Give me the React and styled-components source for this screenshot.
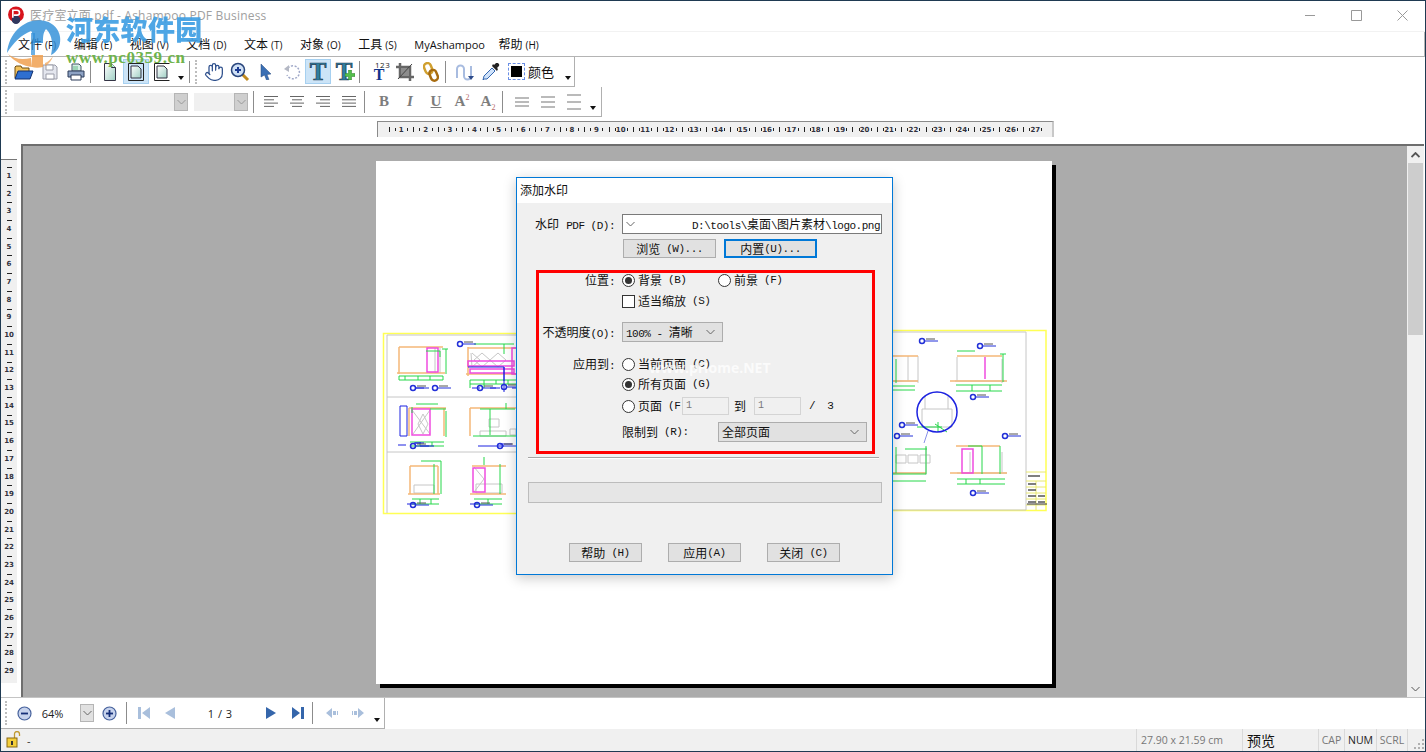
import React from "react";
import styled, { createGlobalStyle } from "styled-components";
import { Hand } from "lucide-react";

const UI = `"Open Sans", "Noto Sans CJK SC", sans-serif`;
const DLG = `"Liberation Mono", "Noto Sans CJK SC", monospace`;

const GlobalStyle = createGlobalStyle`
  html, body { margin: 0; padding: 0; background: #fff; overflow: hidden; }
  * { box-sizing: border-box; }
`;

const Window = styled.div`
  position: relative;
  width: 1426px;
  height: 752px;
  display: flex;
  flex-direction: column;
  background: #fff;
  border: 1px solid #1f3a52;
  font-family: ${UI};
  overflow: hidden;
`;

/* title bar */
const TitleBar = styled.div`
  height: 31px;
  flex: none;
  display: flex;
  align-items: center;
  padding: 0 0 2px 6px;
  border-bottom: 1px solid #f2f2f2;
`;
const Title = styled.span`
  margin-left: 5px;
  font-size: 12px;
  letter-spacing: 0.2px;
  color: #a0a0a0;
  flex: 1;
`;
const WinButton = styled.div`
  width: 46px;
  height: 28px;
  display: flex;
  align-items: center;
  justify-content: center;
`;

/* menu */
const MenuBar = styled.div`
  height: 25px;
  flex: none;
  display: flex;
  align-items: center;
  gap: 17.6px;
  padding-left: 17px;
  border-bottom: 1px solid #b4b4b4;
  border-right: 1px solid #b4b4b4;
`;
const MenuItem = styled.span`
  font-size: ${(p) => (p.$latin ? 11 : 12)}px;
  margin-right: ${(p) => (p.$latin ? -4 : 0)}px;
  color: #111;
  white-space: nowrap;
  small { font-size: 10px; margin-left: 3px; }
`;

/* toolbars */
const Toolbar = styled.div`
  height: 30px;
  flex: none;
  width: ${(p) => p.$width}px;
  display: flex;
  align-items: center;
  padding-left: 4px;
  border-bottom: 1px solid #b0b0b0;
  border-right: 1px solid #b0b0b0;
`;
const Grip = styled.div`
  width: 2px;
  height: 24px;
  flex: none;
  margin-right: ${(p) => p.$after ?? 4}px;
  border-left: 2px dotted #bdbdbd;
`;
const Sep = styled.div`
  width: 1px;
  height: 22px;
  flex: none;
  margin: 0 ${(p) => p.$right ?? 6}px 0 ${(p) => p.$left ?? 1}px;
  background: #8c8c8c;
`;
const ToolButton = styled.div`
  position: relative;
  width: ${(p) => p.$width ?? 26}px;
  height: 25px;
  flex: none;
  display: flex;
  align-items: center;
  justify-content: center;
  background: ${(p) => (p.$active ? "#cce4f7" : "transparent")};
  border: 1px solid ${(p) => (p.$active ? "#a6d0f0" : "transparent")};
`;
const DropArrow = styled.div`
  width: 12px;
  height: 25px;
  flex: none;
  display: flex;
  align-items: flex-end;
  justify-content: center;
  padding-bottom: 4px;
  &::after {
    content: "";
    border-left: 3.5px solid transparent;
    border-right: 3.5px solid transparent;
    border-top: 4px solid #111;
  }
`;
const TextGlyph = styled.span`
  font-family: "Liberation Serif", serif;
  font-weight: bold;
  font-style: ${(p) => (p.$italic ? "italic" : "normal")};
  text-decoration: ${(p) => (p.$under ? "underline" : "none")};
  font-size: ${(p) => p.$size ?? 15}px;
  margin-top: ${(p) => p.$top ?? 0}px;
  line-height: 1;
  color: ${(p) => p.$color ?? "#7d7d7d"};
  sup, sub { font-size: 8px; color: #b56a6a; line-height: 0; font-weight: normal; }
`;
const BigT = styled(TextGlyph)`
  font-size: 25px;
  color: #2f7f9f;
  -webkit-text-stroke: 0.7px #24384f;
`;
const SmallDigits = styled.span`
  position: absolute;
  top: 0;
  left: 8px;
  font-size: 8px;
  line-height: 10px;
  letter-spacing: 0.5px;
  color: #222;
`;
const ColorSwatch = styled.div`
  width: 17px;
  height: 17px;
  margin-left: 4px;
  flex: none;
  padding: 2px;
  border: 1px dashed #6b8fe6;
  &::after { content: ""; display: block; width: 100%; height: 100%; background: #000; }
`;
const ColorLabel = styled.span`
  width: 36px;
  margin-left: 3px;
  font-size: 13px;
  color: #111;
`;
const FontCombo = styled.div`
  width: ${(p) => p.$width}px;
  height: 18px;
  margin-right: ${(p) => p.$after}px;
  flex: none;
  display: flex;
  justify-content: flex-end;
  background: #f0f0f0;
`;
const ComboArrow = styled.div`
  width: ${(p) => p.$width ?? 14}px;
  height: ${(p) => p.$height ?? 18}px;
  flex: none;
  display: flex;
  align-items: center;
  justify-content: center;
  background: ${(p) => p.$bg ?? "#cfcfcf"};
  border: 1px solid #b5b5b5;
`;

/* rulers */
const RulerRow = styled.div`
  height: 27px;
  flex: none;
  padding: 4px 0 0 376px;
`;
const HRuler = styled.div`
  width: 677px;
  height: 16px;
  display: flex;
  align-items: center;
  padding-left: 11px;
  background: #f0f0f0;
  border-top: 1px solid #8a8a8a;
  border-left: 1px solid #8a8a8a;
  border-right: 2px solid #c8c8c8;
  overflow: hidden;
  position: relative;
`;
const HCell = styled.div`
  width: 24.4px;
  flex: none;
  display: grid;
  grid-template-columns: repeat(4, 1fr);
  align-items: center;
  justify-items: start;
`;
const HTick = styled.i`
  display: block;
  width: 1px;
  height: ${(p) => (p.$tall ? 5 : 3)}px;
  background: #222;
`;
const RulerNum = styled.span`
  font-family: "DejaVu Sans", sans-serif;
  font-size: 7px;
  font-weight: bold;
  line-height: 8px;
  color: #30303c;
`;
const HNum = styled(RulerNum)`
  width: 6px;
  margin-left: -3px;
  display: flex;
  justify-content: center;
  white-space: nowrap;
`;

/* main */
const Main = styled.div`
  flex: 1;
  min-height: 0;
  display: flex;
  border-bottom: 1px solid #c4c4c4;
`;
const LeftGutter = styled.div`
  width: 20px;
  flex: none;
  padding-top: 15px;
`;
const VRuler = styled.div`
  width: 16px;
  height: 524px;
  padding-top: 7px;
  background: #f0f0f0;
  border-top: 1px solid #777;
  display: flex;
  flex-direction: column;
`;
const VCell = styled.div`
  height: 17.7px;
  flex: none;
  position: relative;
  display: flex;
  align-items: center;
  justify-content: center;
  &::before {
    content: "";
    position: absolute;
    top: 0;
    left: 6px;
    width: 5px;
    height: 1px;
    background: #222;
  }
`;
const Viewer = styled.div`
  flex: 1;
  background: #ababab;
  border-top: 2px solid #6e6e6e;
  border-left: 2px solid #6e6e6e;
  padding: 15px 0 0 353px;
`;
const Page = styled.div`
  width: 676px;
  height: 523px;
  background: #fff;
  box-shadow: 4px 4px 0 #000;
  display: flex;
  align-items: center;
`;
const Scrollbar = styled.div`
  width: 17px;
  flex: none;
  display: flex;
  flex-direction: column;
  align-items: center;
  background: #f0f0f0;
  margin-right: 1px;
  border-top: 2px solid #6e6e6e;
`;
const ScrollArrow = styled.div`
  height: 17px;
  width: 100%;
  flex: none;
  display: flex;
  align-items: center;
  justify-content: center;
`;
const ScrollThumb = styled.div`
  width: 15px;
  height: 172px;
  background: #cdcdcd;
`;
const ScrollTrack = styled.div`
  flex: 1;
`;

/* bottom */
const BottomBar = styled(Toolbar)`
  height: 31px;
`;
const ZoomValue = styled.span`
  width: 37px;
  margin-right: 9px;
  flex: none;
  font-size: 11px;
  color: #222;
  text-align: center;
`;
const PageNo = styled.span`
  width: 74px;
  flex: none;
  font-size: 11px;
  word-spacing: 1px;
  color: #222;
  text-align: center;
`;
const NavButton = styled.div`
  width: ${(p) => p.$width ?? 26}px;
  height: 24px;
  flex: none;
  display: flex;
  align-items: center;
  justify-content: center;
`;
const StatusBar = styled.div`
  height: 22px;
  flex: none;
  display: flex;
  align-items: center;
  background: #f0f0f0;
  padding-left: 5px;
`;
const StatusText = styled.span`
  flex: 1;
  margin-left: 6px;
  font-size: 11px;
  color: #333;
`;
const StatusCell = styled.div`
  width: ${(p) => p.$width}px;
  height: 100%;
  flex: none;
  display: flex;
  align-items: center;
  justify-content: ${(p) => (p.$left ? "flex-start" : "center")};
  padding-left: ${(p) => (p.$left ? 4 : 0)}px;
  border-left: 1px solid #d9d9d9;
  font-size: ${(p) => p.$size ?? 10.5}px;
  color: ${(p) => p.$color ?? "#777"};
`;
const SizeGrip = styled.div`
  width: 18px;
  height: 100%;
  flex: none;
  border-left: 1px solid #d9d9d9;
  display: flex;
  align-items: flex-end;
  justify-content: flex-end;
  padding: 0 1px 2px 0;
`;

/* dialog */
const Dialog = styled.div`
  position: absolute;
  left: 515px;
  top: 176px;
  width: 377px;
  height: 398px;
  display: flex;
  flex-direction: column;
  background: #f0f0f0;
  border: 1px solid #0078d7;
  box-shadow: 0 3px 12px rgba(0, 0, 0, 0.22);
  font-family: ${DLG};
  font-size: 12px;
  color: #111;
  small { font-size: 11px; letter-spacing: -0.5px; }
`;
const DialogTitle = styled.div`
  height: 25px;
  flex: none;
  background: #fff;
  padding: 3px 0 0 3px;
  font-family: "Noto Sans CJK SC", sans-serif;
  font-size: 12px;
`;
const DialogBody = styled.div`
  flex: 1;
  position: relative;
  display: flex;
  flex-direction: column;
  padding: 11px 0 0 0;
`;
const TopRow = styled.div`
  display: flex;
  align-items: center;
  height: 20px;
`;
const TopLabel = styled.div`
  width: 98px;
  flex: none;
  text-align: right;
  white-space: nowrap;
`;
const PathBox = styled.div`
  width: 260px;
  height: 20px;
  margin-left: 7px;
  display: flex;
  align-items: center;
  justify-content: space-between;
  padding: 0 1px 0 3px;
  background: #fff;
  border: 1px solid #7a7a7a;
  white-space: nowrap;
`;
const ButtonRow = styled.div`
  display: flex;
  gap: 8px;
  margin: 5px 0 0 106px;
`;
const Btn = styled.div`
  width: ${(p) => p.$width ?? 93}px;
  height: 19px;
  display: flex;
  align-items: center;
  justify-content: center;
  white-space: nowrap;
  background: #e1e1e1;
  border: ${(p) => (p.$focus ? "2px solid #0078d7" : "1px solid #adadad")};
`;
const RedBox = styled.div`
  width: 339px;
  height: 184px;
  margin: 12px 0 0 19px;
  border: 3px solid #f00;
`;
const Row = styled.div`
  display: flex;
  align-items: center;
  height: ${(p) => p.$h ?? 14}px;
  margin-top: ${(p) => p.$top ?? 0}px;
  padding-left: ${(p) => (p.$indent ? 83 : 0)}px;
  white-space: nowrap;
`;
const RowLabel = styled.div`
  width: 76px;
  margin-right: 7px;
  flex: none;
  text-align: right;
`;
const Radio = styled.span`
  width: 13px;
  height: 13px;
  margin-right: 3px;
  flex: none;
  display: flex;
  align-items: center;
  justify-content: center;
  border-radius: 50%;
  background: #fff;
  border: 1px solid #333;
  &::after {
    content: "";
    width: 7px;
    height: 7px;
    border-radius: 50%;
    background: ${(p) => (p.$on ? "#333" : "transparent")};
  }
`;
const Check = styled.span`
  width: 13px;
  height: 13px;
  margin-right: 3px;
  flex: none;
  background: #fff;
  border: 1px solid #333;
`;
const Option = styled.span`
  width: ${(p) => p.$width ?? "auto"};
  display: flex;
  align-items: center;
  flex: none;
`;
const Select = styled.div`
  width: ${(p) => p.$width}px;
  height: 20px;
  display: flex;
  align-items: center;
  justify-content: space-between;
  padding: 0 7px 0 3px;
  background: #e1e1e1;
  border: 1px solid #adadad;
`;
const PageInput = styled.div`
  width: 47px;
  height: 18px;
  padding-left: 3px;
  background: #f0f0f0;
  border: 1px solid #d4d4d4;
  color: #777;
  font-size: 10px;
  line-height: 16px;
`;
const InlineWord = styled.span`
  margin: 0 8px 0 5px;
`;
const PageTotal = styled.small`
  margin-left: 8px;
`;
const Divider = styled.div`
  width: 351px;
  height: 2px;
  margin: 3px 0 0 11px;
  background: #a5a5a5;
  border-bottom: 1px solid #fff;
`;
const Progress = styled.div`
  width: 354px;
  height: 21px;
  margin: 23px 0 0 11px;
  background: #e6e6e6;
  border: 1px solid #bcbcbc;
`;
const FooterRow = styled.div`
  display: flex;
  gap: 26px;
  margin: 40px 0 0 52px;
`;
const GhostMark = styled.span`
  position: absolute;
  left: 132px;
  top: 155px;
  font-family: "Open Sans", sans-serif;
  font-weight: bold;
  font-size: 14px;
  color: rgba(255, 255, 255, 0.75);
`;

/* site watermark */
const SiteMark = styled.div`
  position: absolute;
  left: 4px;
  top: 12px;
  display: flex;
  pointer-events: none;
`;
const SiteText = styled.div`
  margin-left: 3px;
  display: flex;
  flex-direction: column;
`;
const SiteName = styled.span`
  font-family: "Noto Sans CJK SC", sans-serif;
  font-weight: 900;
  font-size: 27px;
  line-height: 37px;
  margin: -3px 0 3px;
  letter-spacing: 0.3px;
  color: #3f9fe3;
  opacity: 0.92;
`;
const SiteUrl = styled.span`
  font-family: "Liberation Serif", serif;
  font-weight: bold;
  font-size: 17px;
  line-height: 16px;
  letter-spacing: 0.55px;
  color: #6fb34c;
`;

const Chevron = ({ color = "#666", w = 9 }) => (
  <svg width={w} height="6" viewBox="0 0 9 6">
    <path d="M.5 1l4 4 4-4" fill="none" stroke={color} strokeWidth="1" />
  </svg>
);

const OpenIcon = () => (
  <svg width="20" height="18" viewBox="0 0 20 18">
    <path d="M1 15V4l1-1h5l1 2h7v3" fill="#f2c25c" stroke="#6a4a10" />
    <path d="M1 16l3-8h15l-3 8z" fill="#2f6fd0" stroke="#12306e" />
  </svg>
);
const SaveIcon = () => (
  <svg width="16" height="16" viewBox="0 0 16 16">
    <path d="M1 1h12l2 2v12H1z" fill="#e4e6ee" stroke="#9a9ca8" />
    <path d="M4 1h7v5H4zM4 10h8v5H4z" fill="#fff" stroke="#9a9ca8" />
  </svg>
);
const PrintIcon = () => (
  <svg width="18" height="18" viewBox="0 0 18 18">
    <path d="M5 1h7l2 2v5H5z" fill="#d6efe6" stroke="#456" />
    <path d="M1 8h16v6H1z" fill="#8da2c4" stroke="#2b3a58" />
    <path d="M4 12h10v5H4z" fill="#fff" stroke="#2b3a58" />
    <path d="M6 4h5M6 6h5" stroke="#6b8" />
  </svg>
);
const PageIcon = ({ framed, half }) => (
  <svg width="16" height="18" viewBox="0 0 16 18">
    <defs>
      <linearGradient id="pg" x1="0" y1="0" x2="1" y2="1">
        <stop offset="0" stopColor="#fff" />
        <stop offset="1" stopColor="#9fcfc4" />
      </linearGradient>
    </defs>
    {(framed || half) && <path d="M3 3h7l3 3v9H3z" fill="url(#pg)" stroke="#334" />}
    {!framed && !half && <path d="M2.500 .5h7l4 4v13h-11z" fill="url(#pg)" stroke="#334" />}
    {!framed && !half && <path d="M9.500 .5v4h4" fill="#dfe" stroke="#334" />}
    {framed && <path d="M.5 .5h15v17H.5z" fill="none" stroke="#222" />}
    {half && <path d="M15.500 .5H.5v17h15" fill="none" stroke="#222" />}
  </svg>
);
const ZoomIcon = () => (
  <svg width="20" height="20" viewBox="0 0 20 20">
    <path d="M12 12l6 6" stroke="#c08a20" strokeWidth="3" />
    <circle cx="8" cy="8" r="6.500" fill="#cfe0f5" stroke="#28457c" strokeWidth="1.500" />
    <path d="M5 8h6M8 5v6" stroke="#1d3c92" strokeWidth="2" />
  </svg>
);
const CursorIcon = () => (
  <svg width="12" height="16" viewBox="0 0 12 16">
    <path d="M1 0l10 10-4 .5 2 5-2.500 .5-2-5L1 13z" fill="#3a6fb4" stroke="#24497f" strokeWidth=".5" />
  </svg>
);
const RotateIcon = () => (
  <svg width="18" height="18" viewBox="0 0 18 18">
    <path d="M5 5a6.500 6.500 0 1 1-1 7" fill="none" stroke="#9fa8c8" strokeWidth="1.500" strokeDasharray="2 1.500" />
    <path d="M1 6l5-4v7z" fill="#b4b8c4" />
  </svg>
);
const PlusBadge = () => (
  <svg width="10" height="10" viewBox="0 0 10 10" style={{ position: "absolute", right: 1, bottom: 3 }}>
    <path d="M3.500 0h3v3.500H10v3H6.500V10h-3V6.500H0v-3h3.500z" fill="#54c04c" stroke="#2d7a2a" strokeWidth=".5" />
  </svg>
);
const CropIcon = () => (
  <svg width="18" height="18" viewBox="0 0 18 18">
    <path d="M4 0v14h14M0 4h14v14" fill="none" stroke="#666" strokeWidth="2.500" />
    <path d="M5 5h8v8H5z" fill="#8c8c8c" />
    <path d="M16 1L2 16" stroke="#444" />
  </svg>
);
const LinkIcon = () => (
  <svg width="16" height="20" viewBox="0 0 16 20">
    <rect x="1.500" y="1" width="7" height="11" rx="3.500" transform="rotate(-22 5 6)" fill="none" stroke="#d0a030" strokeWidth="2.500" />
    <rect x="7" y="8" width="7" height="11" rx="3.500" transform="rotate(-22 10 13)" fill="none" stroke="#a86c10" strokeWidth="2.500" />
  </svg>
);
const CurveIcon = () => (
  <svg width="18" height="18" viewBox="0 0 18 18">
    <path d="M1 15V6a3.500 3.500 0 0 1 7 0v7a3.500 3.500 0 0 0 7 0V3" fill="none" stroke="#a8bce0" strokeWidth="2" />
    <path d="M12 13l3 4 3-4" fill="#2c4a8a" />
  </svg>
);
const DropperIcon = () => (
  <svg width="18" height="18" viewBox="0 0 18 18">
    <path d="M2 16l-1 1 1-4L10 5l3 3-8 8z" fill="#cfe2fa" stroke="#3366b0" />
    <path d="M10 3l5 5 1-2-1-1 1.500-1.500a2 2 0 0 0-3-3L12 2l-1-1z" fill="#222" />
  </svg>
);
const AlignIcon = ({ type }) => {
  const rows = [14, 10, 14, 10];
  return (
    <svg width="14" height="11" viewBox="0 0 14 11">
      {rows.map((w, i) => {
        const len = type === "justify" ? 14 : w;
        const x = type === "left" || type === "justify" ? 0 : type === "right" ? 14 - len : (14 - len) / 2;
        return <rect key={i} x={x} y={i * 3.3} width={len} height="1" fill="#666" />;
      })}
    </svg>
  );
};
const SpacingIcon = ({ gap }) => (
  <svg width="16" height="16" viewBox="0 0 16 16">
    {[-1, 0, 1].map((i) => (
      <rect key={i} x="1" y={7.5 + i * gap} width="14" height="1" fill="#777" />
    ))}
  </svg>
);
const RoundIcon = ({ plus }) => (
  <svg width="15" height="15" viewBox="0 0 15 15">
    <circle cx="7.500" cy="7.500" r="6.500" fill="#c6d2ec" stroke="#46619c" strokeWidth="1.200" />
    <path d="M4 7.500h7" stroke="#162f78" strokeWidth="1.800" />
    {plus && <path d="M7.500 4v7" stroke="#162f78" strokeWidth="1.800" />}
  </svg>
);
const NavIcon = ({ d, fill }) => (
  <svg width="14" height="14" viewBox="0 0 14 14">
    <path d={d} fill={fill} />
  </svg>
);
const LockIcon = () => (
  <svg width="15" height="18" viewBox="0 0 15 18">
    <path d="M8.500 7V3a2.500 2.500 0 0 1 5 0v2" fill="none" stroke="#c09a30" strokeWidth="1.300" />
    <rect x="1" y="7" width="10" height="9" fill="#f4cf3c" stroke="#8a6a10" />
    <rect x="5" y="10" width="2" height="4" fill="#333" />
  </svg>
);

const SiteLogo = () => (
  <svg width="58" height="56" viewBox="0 0 58 56">
    <path d="M2 40C4 18 22 4 40 8c10 2 17 12 15 22-1 6-5 10-9 12 2-8 2-20-5-26-3 4-3 8-3 14H28c0-6 0-10-2-12C16 22 8 30 2 40z" fill="#2f8fd8" opacity=".82" />
    <path d="M26 20h4v22h-4z" fill="#2f8fd8" opacity=".7" />
    <path d="M3 41c6 8 16 12 24 13l-1-9C17 47 9 46 3 41z" fill="#f0a050" opacity=".85" />
    <path d="M27 42h11v12c-4 1-8 1-11 0z" fill="#f0a050" opacity=".85" />
    <path d="M40 50c3-1 6-4 8-7-1 4-4 8-8 10z" fill="#f0a050" opacity=".7" />
  </svg>
);
const AppLogo = () => (
  <svg width="18" height="18" viewBox="0 0 16 17">
    <circle cx="8" cy="8" r="7.500" fill="#d8141c" />
    <circle cx="8" cy="13" r="4" fill="#30375e" />
    <path d="M5 11V4h4a2.300 2.300 0 0 1 0 4.600H6" fill="none" stroke="#fff" strokeWidth="1.500" />
  </svg>
);

// 图纸 - 用屏幕坐标画，带一点旋转感的 CAD 线稿
const box = (x, y, w, h) => `M${x} ${y}h${w}v${h}h${-w}z`;
const greens = [
  "M399 377h44M399 381h44M399 377v4M443 377v4M446 350v25M442 350h6M405 377v4M418 377v4M430 377v4M426 352h14v6",
  "M470 381h47M470 385h47M470 381v8M484 381v8M496 381v4M508 381v4M474 345h40M504 345v10",
  "M410 443h34M410 447h34M412 408v6M446 412v26M430 410h16M420 443v4M432 443v4M416 405h22",
  "M480 410h35M490 410v26M473 437h44M506 404v6",
  "M412 500h27M412 505h27M421 462h20v33M434 465v30M420 500v5M431 500v5",
  "M474 500h28M474 505h28M484 458v8M500 465v30M488 500v5",
  "M896 360v24M893 387h22M893 391h22",
  "M956 386h46M956 392h46M1003 355v28M1000 355h6M957 352h18M972 386v6M990 386v6",
  "M890 475h36M890 482h36M926 447v28M896 448v26M905 450h22",
  "M957 480h48M957 485h48M968 447h14M982 447v28M1000 447v28M966 480v5M980 480v5",
  "M935 425l12 8M917 428h25M938 423v10",
];
const oranges = [
  "M399 348v27M399 348h44M397 374h48",
  "M468 348v29M468 349h50M466 375h52",
  "M409 409v28M409 409h37M444 409v28",
  "M470 409v28M470 409h47",
  "M410 467v28M438 467v28M410 467h28M408 495h32",
  "M472 467h34M470 495h36",
  "M892 357h26M890 382h28",
  "M957 357h45M950 382h57",
  "M890 474h36",
  "M956 447h44M950 474h57",
];
const magentas = [
  box(427, 349, 11, 24),
  box(468, 362, 46, 5) + box(470, 370, 44, 4) + box(512, 349, 6, 26),
  box(412, 410, 18, 26),
  box(473, 469, 12, 24),
  box(962, 450, 11, 24),
  "M985 358v22",
];
const grays = [
  "M387 336v178M387 398h130M387 453h130M387 336h130",
  "M440 349v25M435 349v25",
  "M472 354l8 7-8 7-1-14M482 354l8 7-8 7-8-7zM498 354l8 7-8 7-8-7z",
  "M418 425l5-10 5 10-5 10zM430 411l-17 24M412 411l18 24",
  "M480 432h26v5h-26zM489 420h10v8h-10zM510 430h6v6h-6z",
  "M414 486h20v8h-20zM476 485h26v9h-26zM474 468l10 12-10 13",
  "M890 333h136M1026 333v178M890 511h136",
  "M890 382h28M918 357v27M908 357v25",
  "M957 358v24M955 382h50M1002 360v24",
  "M896 456h10v8h-10zM908 456h10v8h-10zM920 456h10v8h-10zM890 474h36M926 448v28",
  "M957 474h50M970 453v20M1002 453v20",
  "M922 410h30v18h-30zM925 396v14M948 396v14",
];
const blues = [
  box(400, 407, 7, 30),
  "M468 368h36v25M504 368v14M424 389h-9M520 389h-8M480 389h-8",
  "M490 389h10M415 444l6 0M424 444h-10M420 447h14M398 446h8",
  "M478 447h14M492 447h12M500 445h12M415 505h-8M478 505h-8",
];
const labels = [
  [413, 389], [480, 389], [413, 447], [500, 447], [413, 506], [477, 506], [504, 388], [435, 389],
  [973, 398], [973, 494], [902, 426], [980, 347], [1005, 437], [897, 437], [922, 342], [460, 345],
];

const CadDrawing = () => (
  <svg width="676" height="195" viewBox="376 326 676 195" style={{ filter: "blur(0.3px)" }}>
    <path d={box(383.5, 334.5, 136, 180) + box(885, 331.5, 161, 180)} fill="none" stroke="#ffff55" strokeWidth="1.500" />
    <path d={grays.join("")} fill="none" stroke="#c6c6c6" strokeWidth="1" />
    <path d={oranges.join("")} fill="none" stroke="#f5b878" strokeWidth="1.500" />
    <path d={magentas.join("")} fill="none" stroke="#f04ce0" strokeWidth="1.500" />
    <path d={greens.join("")} fill="none" stroke="#27d84a" strokeWidth="1" />
    <path d={blues.join("")} fill="none" stroke="#1c22e0" strokeWidth="1" />
    {labels.map(([x, y], i) => (
      <g key={i}>
        <circle cx={x} cy={y} r="2.500" fill="none" stroke="#2230d8" strokeWidth="1.500" />
        <path d={`M${x + 3} ${y}h13`} stroke="#2230d8" />
        <path d={`M${x + 4} ${y - 2}h9`} stroke="#555" />
      </g>
    ))}
    <circle cx="937" cy="413" r="20" fill="none" stroke="#1c22e0" strokeWidth="1.500" />
    <path d="M928 432l-4 12" stroke="#8890e8" strokeWidth="1" />
    <path d="M1026 473h20M1026 482h20M1026 488h20M1026 494h20M1026 500h20M1026 506h20M1036 482v29" fill="none" stroke="#e8e870" />
    <path d="M1028 477h12M1028 485h8M1028 491h8M1028 497h8M1028 503h8M1038 497h7M1038 503h7" stroke="#555" strokeWidth="1.500" />
    <path d="M1027 505h20" stroke="#333" />
  </svg>
);

const menus = [["文件", "(F)"], ["编辑", "(E)"], ["视图", "(V)"], ["文档", "(D)"], ["文本", "(T)"], ["对象", "(O)"], ["工具", "(S)"], ["MyAshampoo", ""], ["帮助", "(H)"]];

const rulerCells = Array.from({ length: 27 }, (_, i) => i + 1);
const sideCells = Array.from({ length: 29 }, (_, i) => i + 1);

const TB = { first: "M1 1h3v12H1zM13 1v12L5 7z", prev: "M12 1v12L2 7z", next: "M2 1v12l10-6z", last: "M1 1v12l8-6zM10 1h3v12h-3z", back: "M7 2v10L1 7zM8 5h3v4H8zM12 5h1v4h-1z", fwd: "M7 2v10l6-5zM6 5H3v4h3zM2 5H1v4h1z" };

export default function App() {
  return (
    <>
      <GlobalStyle />
      <Window>
        <TitleBar>
          <AppLogo />
          <Title>医疗室立面.pdf - Ashampoo PDF Business</Title>
          <WinButton>
            <svg width="10" height="10"><path d="M0 5.500h10" stroke="#999" /></svg>
          </WinButton>
          <WinButton>
            <svg width="11" height="11"><path d="M.5 .5h10v10H.5z" fill="none" stroke="#999" /></svg>
          </WinButton>
          <WinButton>
            <svg width="11" height="11"><path d="M.5 .5l10 10M10.500 .5l-10 10" stroke="#999" /></svg>
          </WinButton>
        </TitleBar>

        <MenuBar>
          {menus.map(([zh, key]) => (
            <MenuItem key={zh} $latin={!key}>
              {zh}
              {key && <small>{key}</small>}
            </MenuItem>
          ))}
        </MenuBar>

        <Toolbar $width={574}>
          <Grip />
          <ToolButton><OpenIcon /></ToolButton>
          <ToolButton><SaveIcon /></ToolButton>
          <ToolButton><PrintIcon /></ToolButton>
          <Sep />
          <ToolButton><PageIcon /></ToolButton>
          <ToolButton $active><PageIcon framed /></ToolButton>
          <ToolButton><PageIcon half /></ToolButton>
          <DropArrow />
          <Sep $left={2} $right={5} />
          <Grip />
          <ToolButton><Hand size={20} color="#2d4f8c" fill="#fff" strokeWidth={1.5} /></ToolButton>
          <ToolButton><ZoomIcon /></ToolButton>
          <ToolButton><CursorIcon /></ToolButton>
          <ToolButton><RotateIcon /></ToolButton>
          <ToolButton $active><BigT>T</BigT></ToolButton>
          <ToolButton><BigT>T</BigT><PlusBadge /></ToolButton>
          <Sep $left={2} />
          <ToolButton>
            <TextGlyph $size={16} $top={7} $color="#10348c">T</TextGlyph>
            <SmallDigits>123</SmallDigits>
          </ToolButton>
          <ToolButton><CropIcon /></ToolButton>
          <ToolButton><LinkIcon /></ToolButton>
          <Sep />
          <ToolButton><CurveIcon /></ToolButton>
          <ToolButton><DropperIcon /></ToolButton>
          <ColorSwatch />
          <ColorLabel>颜色</ColorLabel>
          <DropArrow />
        </Toolbar>

        <Toolbar $width={601}>
          <Grip $after={7} />
          <FontCombo $width={174} $after={6}><ComboArrow><Chevron color="#999" /></ComboArrow></FontCombo>
          <FontCombo $width={54} $after={5}><ComboArrow><Chevron color="#999" /></ComboArrow></FontCombo>
          <Sep $left={0} $right={4} />
          <ToolButton><AlignIcon type="left" /></ToolButton>
          <ToolButton><AlignIcon type="center" /></ToolButton>
          <ToolButton><AlignIcon type="right" /></ToolButton>
          <ToolButton><AlignIcon type="justify" /></ToolButton>
          <Sep $left={2} />
          <ToolButton><TextGlyph>B</TextGlyph></ToolButton>
          <ToolButton><TextGlyph $italic>I</TextGlyph></ToolButton>
          <ToolButton><TextGlyph $under>U</TextGlyph></ToolButton>
          <ToolButton><TextGlyph>A<sup>2</sup></TextGlyph></ToolButton>
          <ToolButton><TextGlyph>A<sub>2</sub></TextGlyph></ToolButton>
          <Sep />
          <ToolButton><SpacingIcon gap={4} /></ToolButton>
          <ToolButton><SpacingIcon gap={5} /></ToolButton>
          <ToolButton><SpacingIcon gap={7} /></ToolButton>
          <DropArrow />
        </Toolbar>

        <RulerRow>
          <HRuler>
            {rulerCells.map((n) => (
              <HCell key={n}>
                <HTick $tall />
                <HTick />
                <HNum>{n}</HNum>
                <HTick />
              </HCell>
            ))}
          </HRuler>
        </RulerRow>

        <Main>
          <LeftGutter>
            <VRuler>
              {sideCells.map((n) => (
                <VCell key={n}><RulerNum>{n}</RulerNum></VCell>
              ))}
            </VRuler>
          </LeftGutter>
          <Viewer>
            <Page>
              <CadDrawing />
            </Page>
          </Viewer>
          <Scrollbar>
            <ScrollArrow>
              <svg width="9" height="6" viewBox="0 0 9 6"><path d="M.5 5l4-4 4 4" fill="none" stroke="#555" strokeWidth="1.800" /></svg>
            </ScrollArrow>
            <ScrollThumb />
            <ScrollTrack />
            <ScrollArrow><Chevron color="#555" /></ScrollArrow>
          </Scrollbar>
        </Main>

        <BottomBar $width={384}>
          <Grip $after={7} />
          <ToolButton $width={20}><RoundIcon /></ToolButton>
          <ZoomValue>64%</ZoomValue>
          <ComboArrow $width={14} $height={18} $bg="#e1e1e1"><Chevron /></ComboArrow>
          <ToolButton $width={31}><RoundIcon plus /></ToolButton>
          <Sep $left={1} $right={4} />
          <NavButton><NavIcon d={TB.first} fill="#a9bfdc" /></NavButton>
          <NavButton><NavIcon d={TB.prev} fill="#a9bfdc" /></NavButton>
          <PageNo>1 / 3</PageNo>
          <NavButton $width={28}><NavIcon d={TB.next} fill="#3566ab" /></NavButton>
          <NavButton><NavIcon d={TB.last} fill="#3566ab" /></NavButton>
          <Sep />
          <NavButton><NavIcon d={TB.back} fill="#a9bfdc" /></NavButton>
          <NavButton><NavIcon d={TB.fwd} fill="#a9bfdc" /></NavButton>
          <DropArrow />
        </BottomBar>

        <StatusBar>
          <LockIcon />
          <StatusText>-</StatusText>
          <StatusCell $width={106} $left>27.90 x 21.59 cm</StatusCell>
          <StatusCell $width={76} $left $size={14} $color="#111">预览</StatusCell>
          <StatusCell $width={26}>CAP</StatusCell>
          <StatusCell $width={32} $color="#222">NUM</StatusCell>
          <StatusCell $width={31}>SCRL</StatusCell>
          <SizeGrip>
            <svg width="10" height="10" viewBox="0 0 10 10" fill="#b0b0b0">
              <path d="M8 0h2v2H8zM4 4h2v2H4zM8 4h2v2H8zM0 8h2v2H0zM4 8h2v2H4zM8 8h2v2H8z" />
            </svg>
          </SizeGrip>
        </StatusBar>

        <Dialog>
          <DialogTitle>添加水印</DialogTitle>
          <DialogBody>
            <TopRow>
              <TopLabel>水印 <small>PDF (D):</small></TopLabel>
              <PathBox>
                <Chevron />
                <span><small>D:\tools\</small>桌面<small>\</small>图片素材<small>\logo.png</small></span>
              </PathBox>
            </TopRow>
            <ButtonRow>
              <Btn>浏览 <small>&nbsp;(W)...</small></Btn>
              <Btn $focus>内置<small>(U)...</small></Btn>
            </ButtonRow>
            <RedBox>
              <Row>
                <RowLabel>位置<small>:</small></RowLabel>
                <Option $width="96px"><Radio $on />背景 <small>&nbsp;(B)</small></Option>
                <Option><Radio />前景 <small>&nbsp;(F)</small></Option>
              </Row>
              <Row $top={7} $indent>
                <Check />适当缩放 <small>&nbsp;(S)</small>
              </Row>
              <Row $top={14} $h={20}>
                <RowLabel>不透明度<small>(O):</small></RowLabel>
                <Select $width={101}><span><small>100% - </small>清晰</span><Chevron /></Select>
              </Row>
              <Row $top={15}>
                <RowLabel>应用到<small>:</small></RowLabel>
                <Radio />当前页面 <small>&nbsp;(C)</small>
              </Row>
              <Row $top={6} $indent>
                <Radio $on />所有页面 <small>&nbsp;(G)</small>
              </Row>
              <Row $top={6} $h={18} $indent>
                <Option $width="60px"><Radio />页面 <small>&nbsp;(F</small></Option>
                <PageInput>1</PageInput>
                <InlineWord>到</InlineWord>
                <PageInput>1</PageInput>
                <PageTotal>/&nbsp;&nbsp;3</PageTotal>
              </Row>
              <Row $top={7} $h={20} $indent>
                <Option $width="96px">限制到 <small>&nbsp;(R):</small></Option>
                <Select $width={149}>全部页面<Chevron /></Select>
              </Row>
            </RedBox>
            <Divider />
            <Progress />
            <FooterRow>
              <Btn $width={73}>帮助 <small>&nbsp;(H)</small></Btn>
              <Btn $width={73}>应用<small>(A)</small></Btn>
              <Btn $width={73}>关闭 <small>&nbsp;(C)</small></Btn>
            </FooterRow>
            <GhostMark>www.pHome.NET</GhostMark>
          </DialogBody>
        </Dialog>

        <SiteMark>
          <SiteLogo />
          <SiteText>
            <SiteName>河东软件园</SiteName>
            <SiteUrl>www.pc0359.cn</SiteUrl>
          </SiteText>
        </SiteMark>
      </Window>
    </>
  );
}
